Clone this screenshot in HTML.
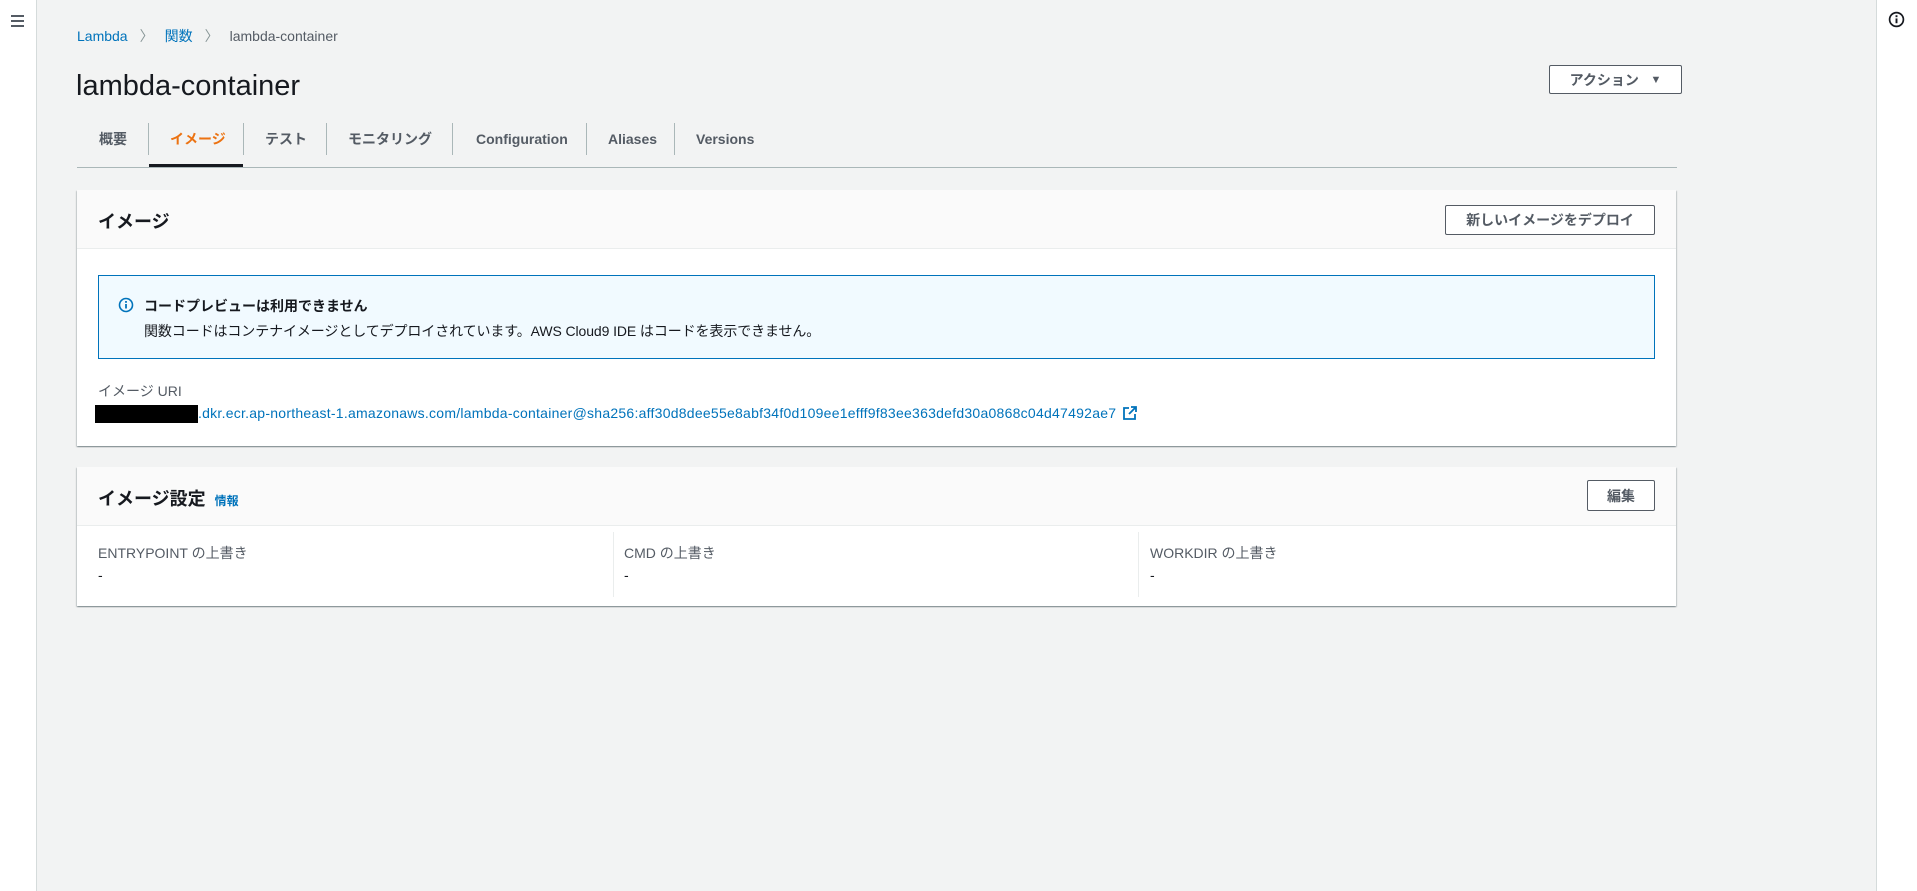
<!DOCTYPE html>
<html><head><meta charset="utf-8"><style>
*{margin:0;padding:0;box-sizing:border-box}
body{width:1917px;height:891px;background:#f2f3f3;font-family:"Liberation Sans","Noto Sans CJK JP",sans-serif;color:#16191f;font-size:14px;position:relative;overflow:hidden}
.abs{position:absolute}
.side{left:0;top:0;width:37px;height:891px;background:#fff;border-right:1px solid #d5dbdb}
.rside{left:1876px;top:0;width:41px;height:891px;background:#fff;border-left:1px solid #d5dbdb}
a{color:#0073bb;text-decoration:none}
.btn{border:1px solid #545b64;background:#fff;font-weight:bold;color:#545b64;font-size:14px;display:flex;align-items:center;justify-content:center;border-radius:2px}
.card{background:#fff;box-shadow:0 1px 1px 0 rgba(0,28,36,.3),1px 1px 1px 0 rgba(0,28,36,.15),-1px 1px 1px 0 rgba(0,28,36,.15)}
.hdr{background:#fafafa;border-bottom:1px solid #eaeded;position:absolute;left:0;right:0;top:0}
.tab{top:129px;font-weight:bold;color:#545b64;font-size:14px}
.lt{top:131px}
.sep{top:123px;width:1px;height:32px;background:#aab7b8}
</style></head><body>
<div class="abs side"></div>
<div class="abs" style="left:11px;top:15px;width:13px">
<div style="height:2px;background:#545b64;margin-bottom:3px"></div><div style="height:2px;background:#545b64;margin-bottom:3px"></div><div style="height:2px;background:#545b64"></div></div>
<div class="abs rside"></div>
<svg class="abs" style="left:1888px;top:11px" width="17" height="17" viewBox="0 0 16 16"><circle cx="8" cy="8" r="6.5" fill="none" stroke="#16191f" stroke-width="1.6"/><rect x="7.1" y="7" width="1.8" height="4.5" fill="#16191f"/><rect x="7.1" y="4" width="1.8" height="1.8" fill="#16191f"/></svg>

<div class="abs" style="left:77px;top:26px;font-size:14px;white-space:nowrap"><a>Lambda</a><span style="color:#879596;margin:0 11px 0 12px">〉</span><a>関数</a><span style="color:#879596;margin:0 11px 0 12px">〉</span><span style="color:#545b64">lambda-container</span></div>
<div class="abs" style="left:76px;top:70px;font-size:29px;">lambda-container</div>
<div class="abs btn" style="left:1549px;top:65px;width:133px;height:29px">アクション&nbsp;&nbsp;&nbsp;<span style="font-size:11px">▼</span></div>

<div class="abs tab" style="left:99px">概要</div>
<div class="abs sep" style="left:148px"></div>
<div class="abs tab" style="left:170px;color:#ec7211">イメージ</div>
<div class="abs" style="left:149px;top:164px;width:94px;height:3px;background:#16191f"></div>
<div class="abs sep" style="left:243px"></div>
<div class="abs tab" style="left:265px">テスト</div>
<div class="abs sep" style="left:326px"></div>
<div class="abs tab" style="left:348px">モニタリング</div>
<div class="abs sep" style="left:452px"></div>
<div class="abs tab lt" style="left:476px">Configuration</div>
<div class="abs sep" style="left:586px"></div>
<div class="abs tab lt" style="left:608px">Aliases</div>
<div class="abs sep" style="left:674px"></div>
<div class="abs tab lt" style="left:696px">Versions</div>
<div class="abs" style="left:77px;top:167px;width:1600px;height:1px;background:#aab7b8"></div>

<div class="abs card" style="left:77px;top:190px;width:1599px;height:256px">
 <div class="hdr" style="height:59px"><div style="position:absolute;left:21px;top:18px;font-size:18px;font-weight:bold">イメージ</div>
 <div class="btn" style="position:absolute;left:1368px;top:15px;width:210px;height:30px">新しいイメージをデプロイ</div></div>
 <div style="position:absolute;left:21px;top:85px;width:1557px;height:84px;border:1px solid #0073bb;background:#f1faff">
  <svg style="position:absolute;left:19px;top:21px" width="16" height="16" viewBox="0 0 16 16"><circle cx="8" cy="8" r="6.5" fill="none" stroke="#0073bb" stroke-width="1.6"/><rect x="7.1" y="7" width="1.8" height="4.5" fill="#0073bb"/><rect x="7.1" y="4" width="1.8" height="1.8" fill="#0073bb"/></svg>
  <div style="position:absolute;left:45px;top:20px;font-weight:bold;font-size:14px">コードプレビューは利用できません</div>
  <div style="position:absolute;left:45px;top:45px;font-size:14px;letter-spacing:-0.1px">関数コードはコンテナイメージとしてデプロイされています。AWS Cloud9 IDE はコードを表示できません。</div>
 </div>
 <div style="position:absolute;left:21px;top:191px;color:#545b64;font-size:14px">イメージ URI</div>
 <div style="position:absolute;left:18px;top:215px;width:103px;height:18px;background:#000"></div>
 <div style="position:absolute;left:121px;top:215px;font-size:14px;white-space:nowrap;letter-spacing:0.25px"><a>.dkr.ecr.ap-northeast-1.amazonaws.com/lambda-container@sha256:aff30d8dee55e8abf34f0d109ee1efff9f83ee363defd30a0868c04d47492ae7</a>
 <svg style="vertical-align:-2px;margin-left:3px" width="14" height="14" viewBox="0 0 14 14"><path d="M8 1h5v5M13 1L6 8M6 2H1v11h11V8" fill="none" stroke="#0073bb" stroke-width="1.8"/></svg></div>
</div>

<div class="abs card" style="left:77px;top:467px;width:1599px;height:139px">
 <div class="hdr" style="height:59px"><div style="position:absolute;left:21px;top:18px;font-size:18px;font-weight:bold">イメージ設定 <a style="font-size:12px;margin-left:4px">情報</a></div>
 <div class="btn" style="position:absolute;left:1510px;top:13px;width:68px;height:31px">編集</div></div>
 <div style="position:absolute;left:536px;top:65px;width:1px;height:65px;background:#eaeded"></div>
 <div style="position:absolute;left:1061px;top:65px;width:1px;height:65px;background:#eaeded"></div>
 <div style="position:absolute;left:21px;top:76px;color:#545b64">ENTRYPOINT の上書き</div>
 <div style="position:absolute;left:21px;top:100px">-</div>
 <div style="position:absolute;left:547px;top:76px;color:#545b64">CMD の上書き</div>
 <div style="position:absolute;left:547px;top:100px">-</div>
 <div style="position:absolute;left:1073px;top:76px;color:#545b64">WORKDIR の上書き</div>
 <div style="position:absolute;left:1073px;top:100px">-</div>
</div>
</body></html>
